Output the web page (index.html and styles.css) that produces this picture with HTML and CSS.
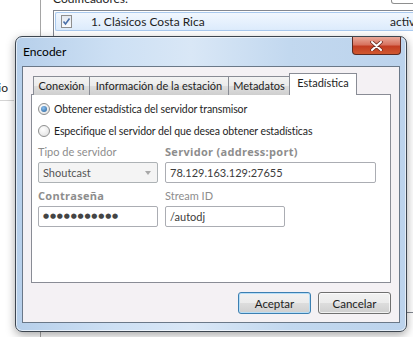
FILE: index.html
```html
<!DOCTYPE html>
<html>
  <head>
    <title>Encoder</title>
    <link rel="stylesheet" href="styles.css">
  </head>
  <body>
    <div class="side">
      <div class="sideItem"><span>Servicio</span></div>
    </div>
    <div class="parent">
      <div class="parentHead">
        <span class="parentLabel">Codificadores:</span>
        <span class="parentBtn"></span>
      </div>
      <div class="list">
        <div class="listRow">
          <span class="check">
            <svg width="9" height="9" viewBox="0 0 9 9"><path d="M1.5 4.5 L3.5 7 L7.5 1.5" fill="none" stroke="#4a6fa8" stroke-width="1.6"/></svg>
          </span>
          <span class="rowName">1. Clásicos Costa Rica</span>
          <span class="rowState">activo</span>
        </div>
      </div>
    </div>

    <div class="dialog">
      <div class="titleBar">
        <span class="title">Encoder</span>
        <span class="closeBtn">
          <svg width="13" height="10" viewBox="0 0 13 10"><path d="M2 1 L11 9 M11 1 L2 9" stroke="#6d2c22" stroke-width="3.6" stroke-linecap="round"/><path d="M2 1 L11 9 M11 1 L2 9" stroke="#fff" stroke-width="2" stroke-linecap="round"/></svg>
        </span>
      </div>
      <div class="client">
        <div class="tabs">
          <div class="tab t1">Conexión</div>
          <div class="tab t2">Información de la estación</div>
          <div class="tab t3">Metadatos</div>
          <div class="tab t4 active">Estadística</div>
        </div>
        <div class="panel">
          <div class="radioRow"><span class="radio on"></span>Obtener estadística del servidor transmisor</div>
          <div class="radioRow"><span class="radio"></span>Especifique el servidor del que desea obtener estadísticas</div>
          <div class="fields">
            <label class="lbl">Tipo de servidor</label>
            <label class="lbl bold">Servidor (address:port)</label>
            <div class="combo">Shoutcast<span class="arrow"></span></div>
            <div class="field">78.129.163.129:27655</div>
            <label class="lbl bold second">Contraseña</label>
            <label class="lbl second">Stream ID</label>
            <div class="field dots">●●●●●●●●●●●</div>
            <div class="field short">/autodj</div>
          </div>
        </div>
        <div class="buttons">
          <button class="btn default">Aceptar</button>
          <button class="btn">Cancelar</button>
        </div>
      </div>
    </div>
  </body>
</html>
```

FILE: styles.css
```css
body {
  margin: 0;
  width: 413px;
  height: 337px;
  overflow: hidden;
  background-color: #fff;
  display: flex;
  font-family: Lato, "Open Sans", sans-serif;
  font-size: 11px;
  color: #1e1e1e;
}

/* ventana de fondo */
.side {
  width: 40px;
  flex: none;
}
.sideItem {
  margin-top: 80px;
  width: 8px;
  height: 20px;
  padding-right: 6px;
  display: flex;
  justify-content: flex-end;
  border-bottom: 1px solid #d4d4d4;
  white-space: nowrap;
  font-size: 12px;
}
.parent {
  flex: 1;
  border-left: 1px solid #a5a5a5;
  padding-left: 12px;
  overflow: hidden;
}
.parentHead {
  height: 10px;
  display: flex;
  justify-content: space-between;
}
.parentLabel {
  margin-top: -9px;
  font-size: 12px;
}
.parentBtn {
  width: 26px;
  height: 3px;
  border: 1px solid #8e8f8f;
  border-top: none;
  border-radius: 0 0 3px 3px;
  margin-right: -6px;
}
.list {
  height: 300px;
  border: 1px solid #828790;
  border-right: none;
  padding: 1px 0 0 1px;
}
.listRow {
  height: 17px;
  display: flex;
  align-items: center;
  border: 1px solid #a9c9ee;
  border-right: none;
  border-radius: 2px 0 0 2px;
  background: linear-gradient(#f1f7fe, #dcebfc);
  font-size: 12px;
  white-space: nowrap;
}
.check {
  width: 11px;
  height: 11px;
  margin-left: 5px;
  border: 1px solid #8f8f8f;
  background: linear-gradient(#e2e8f0, #fafbfd);
  display: flex;
  align-items: center;
  justify-content: center;
}
.rowName {
  margin-left: 19px;
  width: 299px;
  flex: none;
}

/* dialogo */
.dialog {
  position: absolute;
  left: 15px;
  top: 36px;
  width: 392px;
  height: 296px;
  box-sizing: border-box;
  border: 1px solid #3d4650;
  border-radius: 7px;
  background: linear-gradient(to right, #b6cfea, #cde0f4 25%, #d9e7f6 45%, #c2d8ef 70%, #bcd3ec);
  box-shadow: 0 3px 10px rgba(0, 0, 0, 0.35), inset 0 0 0 1px rgba(255, 255, 255, 0.6);
}
.titleBar {
  height: 29px;
  display: flex;
  justify-content: space-between;
  align-items: flex-start;
  padding-left: 7px;
}
.title {
  margin-top: 7px;
  font-size: 12px;
  color: #000;
}
.closeBtn {
  width: 47px;
  height: 17px;
  margin-right: 5px;
  border: 1px solid #5b2a22;
  border-top: none;
  border-radius: 0 0 4px 4px;
  background: linear-gradient(#e9a99a, #d8735f 45%, #c33d22 55%, #d0582f);
  display: flex;
  align-items: center;
  justify-content: center;
}
.client {
  margin: 0 6px;
  height: 257px;
  box-sizing: border-box;
  border: 1px solid #6a7888;
  background-color: #f4f1f4;
  padding: 6px 8px 0 8px;
}
.tabs {
  height: 22px;
  display: flex;
  align-items: flex-end;
  margin-left: 2px;
}
.tab {
  height: 18px;
  box-sizing: content-box;
  border: 1px solid #898c95;
  border-bottom: none;
  background: linear-gradient(#f3f3f3, #ebebeb 50%, #dddddd 51%, #cfcfcf);
  text-align: center;
  line-height: 18px;
  margin-left: -1px;
  white-space: nowrap;
}
.t1 { width: 55px; margin-left: 0; }
.t2 { width: 138px; }
.t3 { width: 60px; }
.t4 { width: 66px; }
.tab.active {
  height: 21px;
  line-height: 18px;
  background: #fff;
  position: relative;
  z-index: 1;
}
.panel {
  margin-top: -1px;
  height: 189px;
  box-sizing: border-box;
  border: 1px solid #898c95;
  background-color: #fff;
  padding: 3px 6px 0 6px;
}
.radioRow {
  height: 22px;
  display: flex;
  align-items: center;
  font-size: 10.5px;
  letter-spacing: -0.1px;
}
.radio {
  width: 10px;
  height: 10px;
  border: 1px solid #8e8f8f;
  border-radius: 50%;
  background: radial-gradient(circle at 40% 35%, #ffffff, #dedede);
  margin-right: 4px;
  position: relative;
}
.radio.on::after {
  content: "";
  position: absolute;
  left: 2px;
  top: 2px;
  width: 6px;
  height: 6px;
  border-radius: 50%;
  background: radial-gradient(circle at 40% 35%, #8ec1ee, #1f5c98);
}
.fields {
  display: grid;
  grid-template-columns: 120px 211px;
  column-gap: 7px;
  margin-top: 3px;
}
.lbl {
  height: 14px;
  line-height: 14px;
  color: #8d8d8d;
  margin-bottom: 3px;
}
.lbl.bold {
  font-family: "Open Sans", Lato, sans-serif;
  font-weight: bold;
  font-size: 11px;
  letter-spacing: 0.3px;
}
.lbl.second {
  margin-top: 6px;
}
.field, .combo {
  height: 21px;
  box-sizing: border-box;
  border: 1px solid #abadb3;
  border-radius: 2px;
  background-color: #fff;
  padding-left: 4px;
  line-height: 19px;
  color: #3c3c3c;
}
.combo {
  background-color: #f4f4f4;
  border-color: #adb2b5;
  color: #555;
  position: relative;
}
.arrow {
  position: absolute;
  right: 6px;
  top: 8px;
  border-left: 3.5px solid transparent;
  border-right: 3.5px solid transparent;
  border-top: 4px solid #a8a8a8;
}
.field.short {
  width: 120px;
}
.dots {
  font-family: "DejaVu Sans", sans-serif;
  font-size: 7px;
  letter-spacing: 0.8px;
  color: #444;
}
.buttons {
  display: flex;
  justify-content: flex-end;
  gap: 7px;
  margin-top: 9px;
}
.btn {
  width: 73px;
  height: 22px;
  border: 1px solid #707070;
  border-radius: 3px;
  background: linear-gradient(#f2f2f2, #ebebeb 50%, #dddddd 51%, #cfcfcf);
  box-shadow: inset 0 0 0 1px rgba(255, 255, 255, 0.7);
  font-family: Lato, "Open Sans", sans-serif;
  font-size: 11.5px;
  color: #1e1e1e;
  padding: 0;
}
.btn.default {
  border-color: #3c7fb1;
  box-shadow: inset 0 0 0 1px #b6def7;
}
```
